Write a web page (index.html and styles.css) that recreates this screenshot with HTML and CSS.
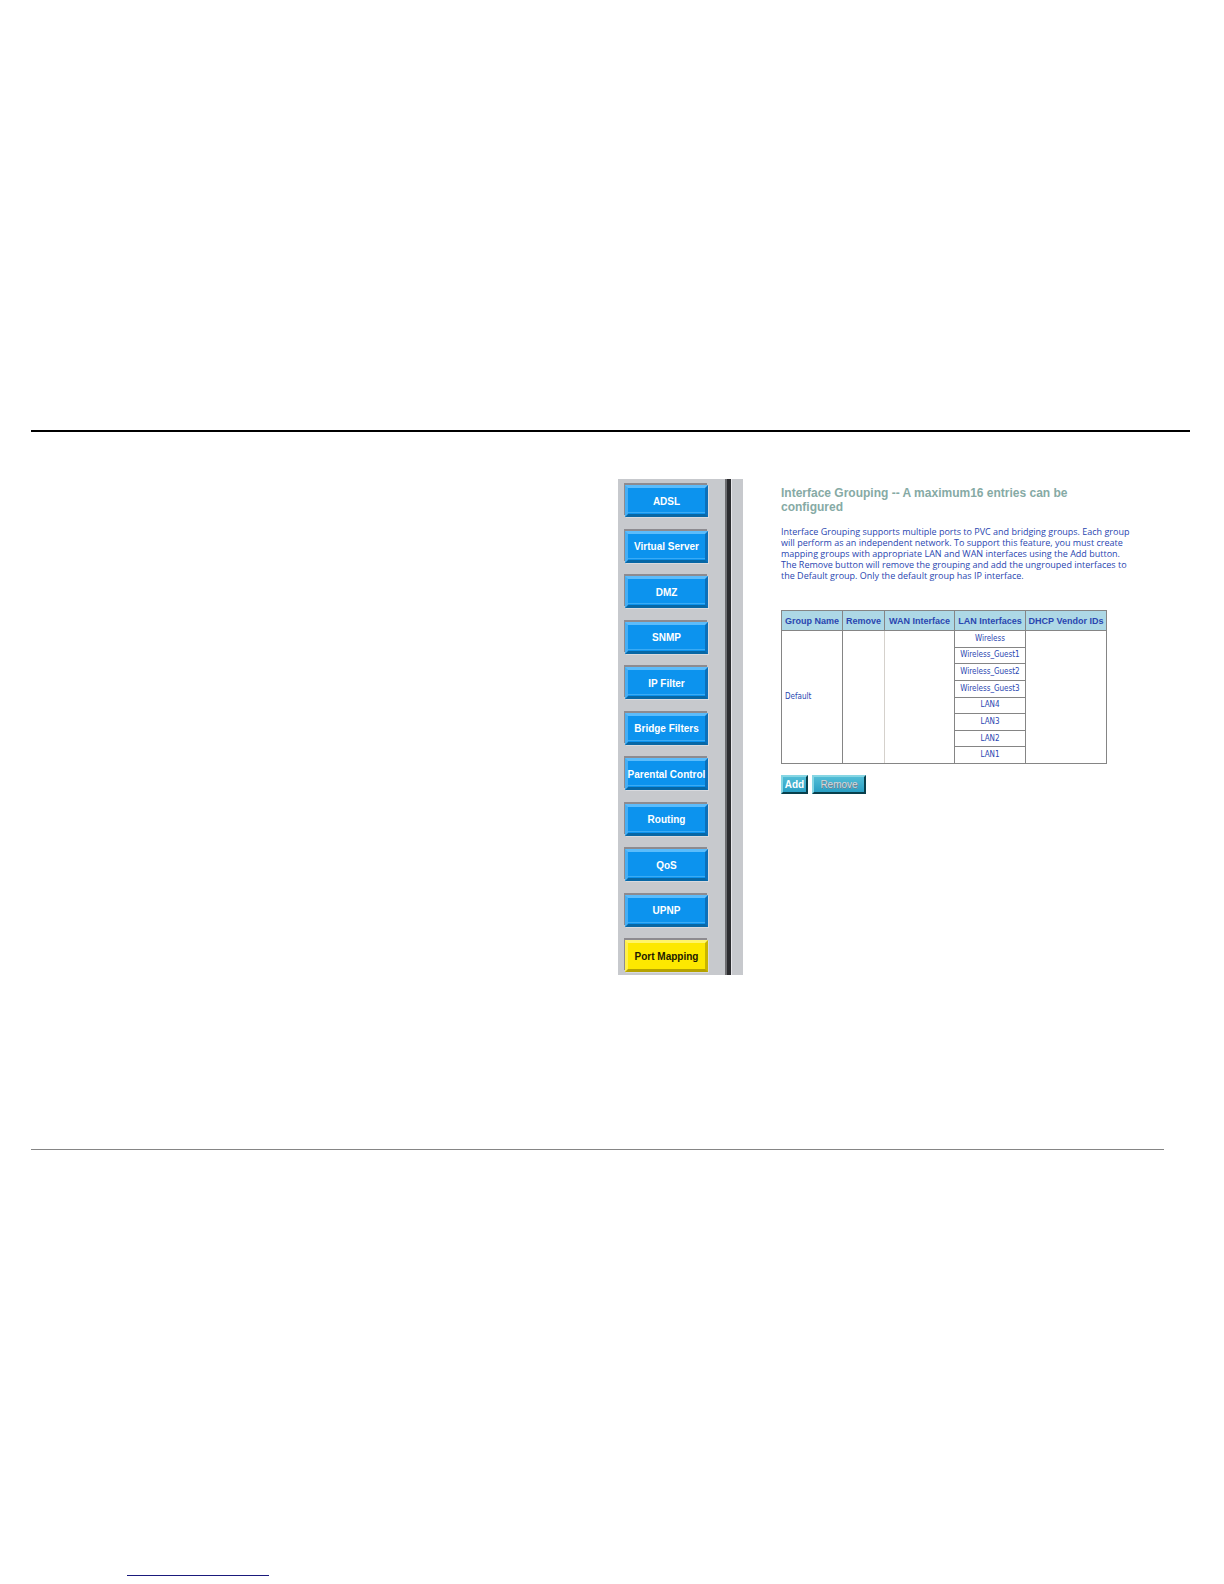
FILE: index.html
```html
<!DOCTYPE html>
<html lang="en">
<head>
    <meta charset="UTF-8">
    <meta name="viewport" content="width=device-width, initial-scale=1.0">
    <title>Interface Grouping</title>
    <link rel="stylesheet" href="styles.css">
</head>
<body>
    <hr class="top-rule">
    <main class="columns">
        <div class="panel">
            <nav class="sidebar">
                <div class="menu">
                    <button class="menu-btn">ADSL</button>
                    <button class="menu-btn">Virtual Server</button>
                    <button class="menu-btn">DMZ</button>
                    <button class="menu-btn">SNMP</button>
                    <button class="menu-btn">IP Filter</button>
                    <button class="menu-btn">Bridge Filters</button>
                    <button class="menu-btn">Parental Control</button>
                    <button class="menu-btn">Routing</button>
                    <button class="menu-btn">QoS</button>
                    <button class="menu-btn">UPNP</button>
                    <button class="menu-btn active">Port Mapping</button>
                </div>
                <div class="divider"></div>
            </nav>
            <section class="content">
                <h1>Interface Grouping -- A maximum16 entries can be<br>configured</h1>
                <p>Interface Grouping supports multiple ports to PVC and bridging groups. Each group<br>
                will perform as an independent network. To support this feature, you must create<br>
                mapping groups with appropriate LAN and WAN interfaces using the Add button.<br>
                The Remove button will remove the grouping and add the ungrouped interfaces to<br>
                the Default group. Only the default group has IP interface.</p>
                <table>
                    <colgroup>
                        <col class="col-group">
                        <col class="col-remove">
                        <col class="col-wan">
                        <col class="col-lan">
                        <col class="col-dhcp">
                    </colgroup>
                    <thead>
                        <tr>
                            <th>Group Name</th>
                            <th>Remove</th>
                            <th>WAN Interface</th>
                            <th>LAN Interfaces</th>
                            <th>DHCP Vendor IDs</th>
                        </tr>
                    </thead>
                    <tbody>
                        <tr>
                            <td class="group" rowspan="8">Default</td>
                            <td class="pale" rowspan="8"></td>
                            <td rowspan="8"></td>
                            <td>Wireless</td>
                            <td rowspan="8"></td>
                        </tr>
                        <tr><td>Wireless_Guest1</td></tr>
                        <tr><td>Wireless_Guest2</td></tr>
                        <tr><td>Wireless_Guest3</td></tr>
                        <tr><td>LAN4</td></tr>
                        <tr><td>LAN3</td></tr>
                        <tr><td>LAN2</td></tr>
                        <tr><td>LAN1</td></tr>
                    </tbody>
                </table>
                <div class="actions">
                    <button class="btn">Add</button>
                    <button class="btn btn-wide" disabled>Remove</button>
                </div>
            </section>
        </div>
    </main>
    <hr class="bottom-rule">
    <footer><hr class="link-rule"></footer>
</body>
</html>
```

FILE: styles.css
```css
* {
    box-sizing: border-box;
}
body {
    margin: 0;
    padding: 430px 34px 0 31px;
    background: white;
    font-family: "Liberation Sans", Arial, sans-serif;
}
hr {
    margin: 0;
    border: none;
}
.top-rule {
    height: 2px;
    background: black;
}
.bottom-rule {
    height: 1px;
    margin: 174px 26px 0 0;
    background: #858585;
}
.link-rule {
    width: 142px;
    height: 1px;
    background: #1a1a7c;
}
footer {
    padding: 425px 0 8px 96px;
}
.columns {
    display: grid;
    grid-template-columns: 1fr 1fr;
    column-gap: 15px;
    margin-top: 47px;
}
.panel {
    grid-column: 2;
    display: flex;
    gap: 38px;
}

/* left menu */
.sidebar {
    display: flex;
    flex: none;
    width: 125px;
    height: 496px;
    background: #c7c9cd;
}
.menu {
    display: flex;
    flex-direction: column;
    justify-content: space-between;
    width: 107px;
    padding: 4px 17px 3px 5px;
}
.menu-btn {
    display: flex;
    align-items: center;
    justify-content: center;
    height: 32px;
    margin: 2px 0 0 2px;
    padding: 0;
    border: 3px solid;
    border-color: #5cbcfb #0b70bb #0767a5 #45aef4;
    background: #0c93ee;
    box-shadow: inset 0 -1px #0c93ee, inset 0 -2px #3aabf5, -1px -2px #8d8b90, 1px 1px #d9dade;
    color: white;
    font-family: "Liberation Sans", Arial, sans-serif;
    font-size: 10px;
    font-weight: bold;
    white-space: nowrap;
}
.menu-btn.active {
    border-color: #fff56a #c9b500 #b5a200 #fff04a;
    background: #fde800;
    box-shadow: -1px -2px #8d8b90, 1px 1px #d9dade;
    color: #1c1a00;
}
.divider {
    width: 7px;
    border: solid #6c6d70;
    border-width: 0 1px 0 2px;
    border-right-color: #e6e6ea;
    background: #2b2c2f;
}

/* right side */
.content {
    padding-top: 7px;
    color: #2a46b0;
}
h1 {
    margin: 0 0 12px;
    color: #86aaa5;
    font-size: 12px;
    line-height: 14px;
    white-space: nowrap;
}
p {
    margin: 0 0 29px;
    font-family: "Open Sans", Verdana, sans-serif;
    font-size: 9px;
    line-height: 11px;
    white-space: nowrap;
}
table {
    width: 325px;
    height: 154px;
    table-layout: fixed;
    border-collapse: collapse;
}
.col-group {
    width: 61px;
}
.col-remove {
    width: 42px;
}
.col-wan {
    width: 70px;
}
.col-lan {
    width: 71px;
}
.col-dhcp {
    width: 81px;
}
th,
td {
    padding: 0;
    border: 1px solid #858585;
    text-align: center;
    white-space: nowrap;
}
th {
    height: 20px;
    background: #add8e6;
    font-size: 9px;
    line-height: 12px;
}
td {
    font-family: "DejaVu Sans Condensed", "DejaVu Sans", sans-serif;
    font-size: 8px;
    line-height: 12px;
}
td.group {
    padding-left: 3px;
    text-align: left;
}
td.pale {
    border-right-color: #d5d1cc;
}
.actions {
    display: flex;
    gap: 4px;
    margin-top: 11px;
}
.btn {
    width: 27px;
    height: 19px;
    padding: 0;
    border: 2px solid;
    border-color: #86d6e4 #083f4c #083f4c #86d6e4;
    background: linear-gradient(#52bdd6, #2a9fc4);
    color: white;
    font-family: "Liberation Sans", Arial, sans-serif;
    font-size: 10px;
    font-weight: bold;
    line-height: 12px;
}
.btn-wide {
    width: 54px;
}
.btn:disabled {
    color: #d8d4d8;
    font-weight: normal;
    text-shadow: 1px 1px #6f8794;
}
```
